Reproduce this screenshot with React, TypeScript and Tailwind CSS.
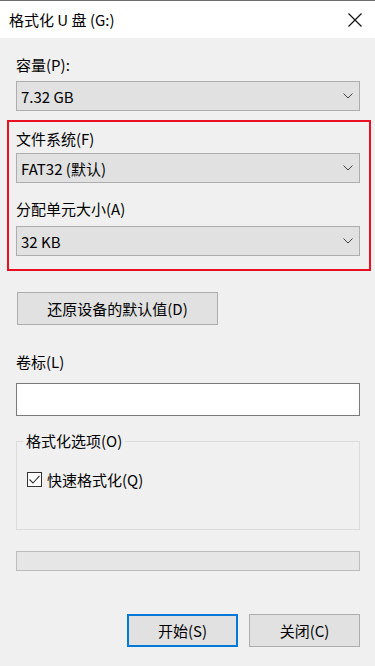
import React from "react";

const font = { fontFamily: '"Noto Sans CJK SC", "Noto Sans", sans-serif' };

function Chevron() {
  return (
    <svg width="10" height="6" viewBox="0 0 10 6" className="absolute right-[6px] top-1/2 -translate-y-1/2">
      <path d="M0.5 0.5 L5 5 L9.5 0.5" fill="none" stroke="#404040" strokeWidth="1" />
    </svg>
  );
}

function Select({ value }: { value: string }) {
  return (
    <div className="relative flex h-[30px] items-center border border-[#adadad] bg-[#e1e1e1] pl-[4px] text-[15px] text-black">
      <span className="leading-none">{value}</span>
      <Chevron />
    </div>
  );
}

export default function App() {
  return (
    <div style={font} className="flex h-[666px] w-[375px] flex-col bg-[#f0f0f0] text-[15px] text-black">
      {/* Title bar */}
      <div className="flex h-[38px] shrink-0 items-center justify-between border-t border-[#6d6d6d] bg-white pl-[9px] pr-[13px]">
        <span className="leading-none">格式化 U 盘 (G:)</span>
        <svg width="14" height="14" viewBox="0 0 14 14">
          <path d="M0.5 0.5 L13.5 13.5 M13.5 0.5 L0.5 13.5" stroke="#111" strokeWidth="1.2" />
        </svg>
      </div>

      <div className="flex flex-col pl-[16px] pr-[15px]">
        <div className="mt-[19px] leading-none">容量(P):</div>
        <div className="mt-[9px]">
          <Select value="7.32 GB" />
        </div>

        {/* red box */}
        <div className="-ml-[9px] -mr-[11px] mt-[9px] border-2 border-[#e81123] pb-[13px] pl-[7px] pr-[9px] pt-[9px]">
          <div className="leading-none">文件系统(F)</div>
          <div className="mt-[7px]">
            <Select value="FAT32 (默认)" />
          </div>
          <div className="mt-[18px] leading-none">分配单元大小(A)</div>
          <div className="mt-[10px]">
            <Select value="32 KB" />
          </div>
        </div>

        <div className="mt-[21px]">
          <button className="ml-[1px] flex h-[33px] w-[201px] items-center justify-center border border-[#adadad] bg-[#e1e1e1] text-[15px] leading-none">
            还原设备的默认值(D)
          </button>
        </div>

        <div className="mt-[29px] leading-none">卷标(L)</div>
        <div className="mt-[14px] h-[33px] border border-[#7a7a7a] bg-white" />

        {/* group box */}
        <div className="relative mt-[25px] h-[89px] border border-[#dcdcdc]">
          <span className="absolute -top-[9px] left-[6px] bg-[#f0f0f0] px-[3px] leading-none">格式化选项(O)</span>
          <div className="ml-[10px] mt-[30px] flex items-center gap-[5px]">
            <div className="flex h-[15px] w-[15px] items-center justify-center border border-[#333] bg-white">
              <svg width="11" height="9" viewBox="0 0 11 9">
                <path d="M0.5 4.5 L4 8 L10.5 0.8" fill="none" stroke="#333" strokeWidth="1.1" />
              </svg>
            </div>
            <span className="leading-none">快速格式化(Q)</span>
          </div>
        </div>

        {/* progress */}
        <div className="mt-[21px] h-[20px] border border-[#bcbcbc] bg-[#e6e6e6]" />

        <div className="mt-[43px] flex justify-end gap-[11px]">
          <button className="flex h-[33px] w-[111px] items-center justify-center border-2 border-[#0078d7] bg-[#e1e1e1] text-[15px] leading-none">
            开始(S)
          </button>
          <button className="flex h-[33px] w-[111px] items-center justify-center border border-[#adadad] bg-[#e1e1e1] text-[15px] leading-none">
            关闭(C)
          </button>
        </div>
      </div>
    </div>
  );
}
